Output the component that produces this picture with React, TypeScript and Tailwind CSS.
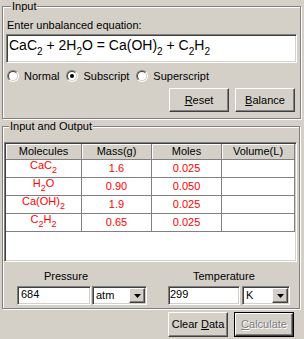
import React from "react";

/**
 * Classic Win32-style "equation balancer" form: equation input group,
 * results grid and gas conditions. Greyed 3D chrome, MS Sans Serif feel.
 */

const bevelOut =
  "border border-t-white border-l-white border-r-[#404040] border-b-[#404040] shadow-[inset_-1px_-1px_0_#808080]";
const sunken =
  "border border-t-[#808080] border-l-[#808080] border-r-white border-b-white shadow-[inset_1px_1px_0_#404040,inset_-1px_-1px_0_#d4d0c8]";
const etched =
  "border border-[#808080] shadow-[inset_1px_1px_0_#fff,1px_1px_0_#fff]";

// digits after a letter or ")" are subscripts, leading coefficients are not
function Formula({ text, subClass }: { text: string; subClass: string }) {
  const out: React.ReactNode[] = [];
  let buf = "";
  let i = 0;
  while (i < text.length) {
    const ch = text[i];
    const prev = text[i - 1] ?? "";
    if (/\d/.test(ch) && /[A-Za-z)]/.test(prev)) {
      if (buf) out.push(buf);
      buf = "";
      let num = "";
      while (i < text.length && /\d/.test(text[i])) num += text[i++];
      out.push(
        <span key={i} className={subClass}>
          {num}
        </span>
      );
      continue;
    }
    buf += ch;
    i++;
  }
  if (buf) out.push(buf);
  return <span className="whitespace-pre">{out}</span>;
}

function Radio({ label, checked }: { label: string; checked?: boolean }) {
  return (
    <label className="flex items-center gap-[5px]">
      <span className="flex h-[12px] w-[12px] rounded-full border border-t-[#808080] border-l-[#808080] border-r-white border-b-white">
        <span className="flex flex-1 items-center justify-center rounded-full border border-t-[#404040] border-l-[#404040] border-r-[#d4d0c8] border-b-[#d4d0c8] bg-white">
          {checked && <span className="h-[4px] w-[4px] rounded-full bg-black" />}
        </span>
      </span>
      <span>{label}</span>
    </label>
  );
}

function Button({ children, className = "" }: { children: React.ReactNode; className?: string }) {
  return (
    <div className={`flex w-[60px] items-center justify-center bg-[#d4d0c8] ${bevelOut} ${className}`}>
      <span>{children}</span>
    </div>
  );
}

function Combo({ value, width }: { value: string; width: string }) {
  return (
    <div className={`flex h-[19px] ${width} bg-white ${sunken} p-[1px]`}>
      <span className="flex-1 pl-[2px] leading-[15px]">{value}</span>
      <span className={`flex w-[16px] items-center justify-center bg-[#d4d0c8] ${bevelOut}`}>
        <svg width="7" height="4" viewBox="0 0 7 4">
          <path d="M0 0h7L3.5 4z" fill="#000" />
        </svg>
      </span>
    </div>
  );
}

const rows = [
  { m: "CaC2", mass: "1.6", moles: "0.025" },
  { m: "H2O", mass: "0.90", moles: "0.050" },
  { m: "Ca(OH)2", mass: "1.9", moles: "0.025" },
  { m: "C2H2", mass: "0.65", moles: "0.025" },
];

const cols = ["w-[76px]", "w-[70px]", "w-[70px]", "flex-1"];
const heads = ["Molecules", "Mass(g)", "Moles", "Volume(L)"];

export default function App() {
  return (
    <div className="h-[339px] w-[304px] overflow-hidden bg-[#d4d0c8] font-['Liberation_Sans',Arial,sans-serif] text-[11px] leading-[13px] text-black">
      <fieldset className={`ml-[2px] w-[298px] ${etched} px-[3px] pb-[6px] pt-[6px]`}>
        <legend className="ml-[5px] bg-[#d4d0c8] px-[1px]">Input</legend>
        <div className="pl-[1px]">Enter unbalanced equation:</div>
        <div className={`mt-[2px] flex h-[29px] w-[291px] items-center bg-white ${sunken} pb-[3px] pl-[2px] text-[14px] leading-none`}>
          <Formula text="CaC2 + 2H2O = Ca(OH)2 + C2H2" subClass="[vertical-align:-5px] text-[10px]" />
        </div>
        <div className="mt-[6px] flex h-[14px] items-center gap-[7px] pl-[1px]">
          <Radio label="Normal" />
          <Radio label="Subscript" checked />
          <Radio label="Superscript" />
        </div>
        <div className="mt-[5px] flex justify-end gap-[6px] pr-[2px]">
          <Button className="h-[24px]">
            <u>R</u>eset
          </Button>
          <Button className="h-[24px]">
            <u>B</u>alance
          </Button>
        </div>
      </fieldset>

      <fieldset className={`mt-[1px] ml-[2px] w-[298px] ${etched} pb-[3px] pl-[1px] pt-[9px]`}>
        <legend className="ml-[5px] bg-[#d4d0c8] px-[1px]">Input and Output</legend>
        <div className={`flex h-[120px] w-[293px] flex-col bg-white ${sunken} p-[1px]`}>
          <div className="flex h-[16px]">
            {heads.map((h, i) => (
              <div
                key={h}
                className={`${cols[i]} flex items-center justify-center border-b border-r border-[#808080] bg-[#d4d0c8] shadow-[inset_1px_1px_0_#fff]`}
              >
                {h}
              </div>
            ))}
          </div>
          {rows.map((r) => (
            <div key={r.m} className="flex h-[18px] text-[#ff0000]">
              <div className={`${cols[0]} flex items-center justify-center border-b border-r border-[#808080] pb-[3px] leading-none`}>
                <Formula text={r.m} subClass="[vertical-align:-4px] text-[9px]" />
              </div>
              <div className={`${cols[1]} flex items-center justify-center border-b border-r border-[#808080]`}>{r.mass}</div>
              <div className={`${cols[2]} flex items-center justify-center border-b border-r border-[#808080]`}>{r.moles}</div>
              <div className={`${cols[3]} border-b border-r border-[#808080]`} />
            </div>
          ))}
        </div>

        <div className="mt-[8px] flex">
          <div className="ml-[13px] w-[130px]">
            <div className="pl-[27px]">Pressure</div>
            <div className="mt-[3px] flex gap-[1px]">
              <div className={`h-[19px] w-[74px] bg-white ${sunken} pl-[3px] leading-[15px]`}>684</div>
              <Combo value="atm" width="w-[55px]" />
            </div>
          </div>
          <div className="ml-[21px] w-[122px]">
            <div className="pl-[25px]">Temperature</div>
            <div className="mt-[3px] flex gap-[2px]">
              <div className={`h-[19px] w-[72px] bg-white ${sunken} pl-[1px] leading-[15px]`}>299</div>
              <Combo value="K" width="w-[48px]" />
            </div>
          </div>
        </div>
      </fieldset>

      <div className="mt-[3px] flex justify-end gap-[6px] pr-[10px]">
        <Button className="h-[25px]">
          Clear <u>D</u>ata
        </Button>
        <div className="flex h-[25px] w-[60px] border border-black">
          <div className={`flex flex-1 items-center justify-center ${bevelOut} text-[#808080] [text-shadow:1px_1px_0_#fff]`}>
            <span>
              <u>C</u>alculate
            </span>
          </div>
        </div>
      </div>
    </div>
  );
}
